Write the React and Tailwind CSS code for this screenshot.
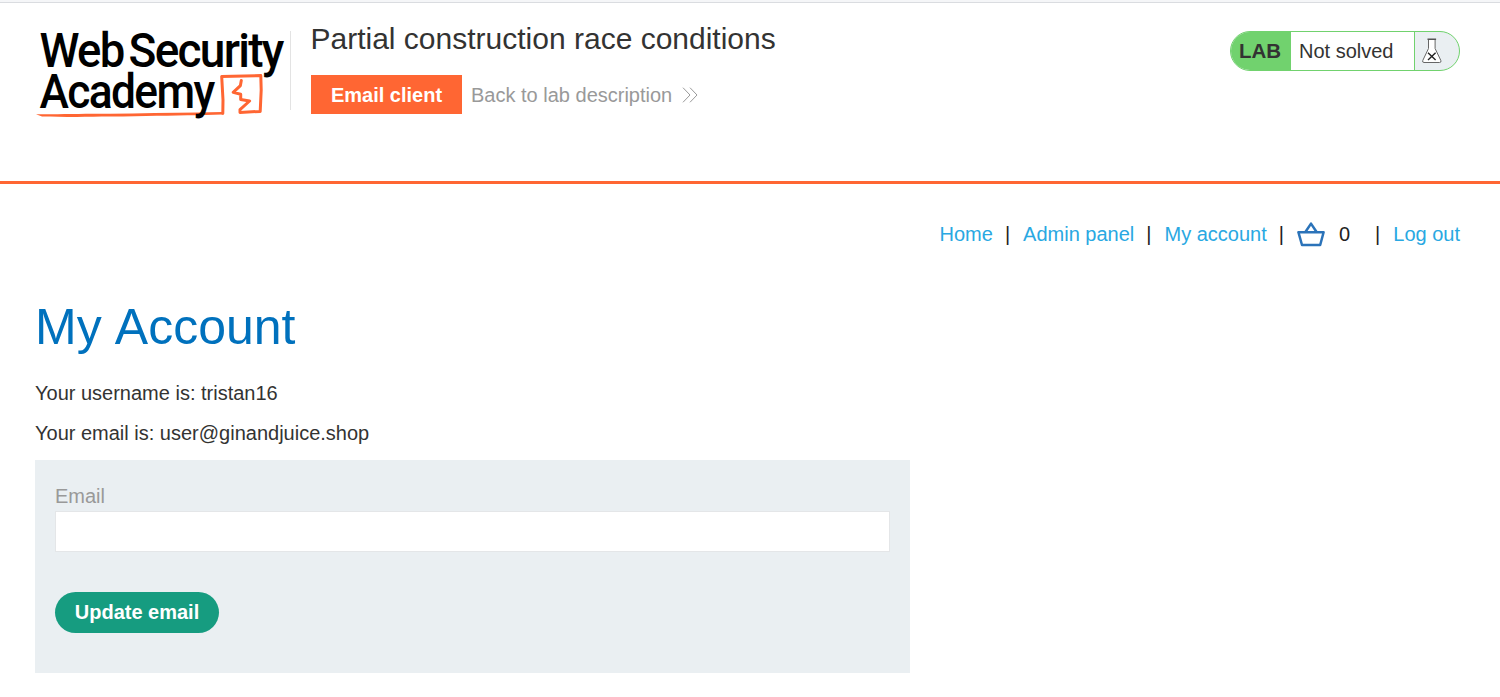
function Logo() {
  return (
    <svg
      className="block h-[100px] w-[255px] shrink-0 overflow-visible"
      viewBox="35 24 255 100"
      fill="none"
      role="img"
      aria-label="Web Security Academy"
    >
      <path d="M36 114.2C60 114.4 82 113.6 110 113.8C140 113.3 170 112.4 198 112.4L222 112V114.6L198 115.2C170 115.4 145 116.2 110 116.6C85 117 60 117 42 116.4Z" fill="#ff6633" />
      <path d="M222.8 113.4L223 100L221.7 76.6L260.8 75.6L261.2 90L260.2 111.4L240 112.4V109.6L249.6 101L240.7 99.4V94.2L233.2 92.4L240.4 85.6L241.3 80.6" stroke="#ff6633" strokeWidth="3" strokeLinejoin="round" strokeLinecap="round" />
      <g fill="#000" fontFamily="Roboto, sans-serif" fontWeight="500" fontSize="47.8" letterSpacing="-1.8">
        <text x="39.5" y="67" textLength="84" lengthAdjust="spacingAndGlyphs">Web</text>
        <text x="128.6" y="67" textLength="154" lengthAdjust="spacingAndGlyphs">Security</text>
        <text x="39.5" y="107.6" textLength="174" lengthAdjust="spacingAndGlyphs">Academy</text>
      </g>
    </svg>
  );
}

function Flask() {
  return (
    <svg className="block h-[26px] w-[22px]" viewBox="0 0 22 26" fill="none">
      <path d="M7.5 1.5V10.5L1.8 22.4Q1 24.5 3 24.5H18.6Q20.6 24.5 19.8 22.4L14.1 10.5V1.5Z" fill="#fff" stroke="#666" strokeWidth="1" />
      <path d="M6.5 1.2H15.1" stroke="#555" strokeWidth="1.4" />
      <path d="M7 14.8L14.6 22M14.6 14.8L7 22" stroke="#222" strokeWidth="1.4" />
    </svg>
  );
}

function Basket() {
  return (
    <svg className="block h-[26px] w-[28px]" viewBox="0 0 28 26" fill="none" stroke="#2b73b9" strokeWidth="2.5" strokeLinejoin="round">
      <path d="M1.4 11.2H26.6L23.2 24H5Z" />
      <path d="M8.4 11L14 2.6L19.6 11" />
    </svg>
  );
}

export default function App() {
  return (
    <div className="h-[697px] overflow-hidden bg-white font-['Liberation_Sans',Arial,sans-serif] text-[20px] leading-[24px] text-[#333332]">
      <div className="h-[3px] border-b border-[#dadce0] bg-[#f5f6f8]" />
      <header className="flex h-[181px] items-start border-b-[3px] border-[#ff6633] pr-10 pl-[35px]">
        <div className="pt-[21px]"><Logo /></div>
        <div className="mt-7 h-[79px] w-px bg-[#e3e3e3]" />
        <div className="pt-[19px] pl-5">
          <h2 className="-ml-[0.5px] text-[30px] leading-[34px]">Partial construction race conditions</h2>
          <div className="mt-[19px] flex items-center">
            <a href="#" className="flex h-[39px] w-[151px] items-center justify-center bg-[#ff6633] font-bold text-white">Email client</a>
            <a href="#" className="ml-[9px] flex items-center text-[#999999]">
              Back to lab description
              <svg className="ml-[10px] block h-4 w-[16px]" viewBox="0 0 16 16" fill="none" stroke="#999999" strokeWidth="1">
                <path d="M1 .7L8 8L1 15.3M8 .7L15 8L8 15.3" />
              </svg>
            </a>
          </div>
        </div>
        <div className="mt-7 ml-auto flex h-10 w-[230px] overflow-hidden rounded-full border border-[#71d26e] bg-[#eaeff2]">
          <div className="flex w-[60px] items-center bg-[#71d26e] pl-2 text-[20.5px] font-bold">LAB</div>
          <div className="flex w-[124px] items-center border-r border-[#71d26e] bg-white pl-2">Not solved</div>
          <div className="flex items-center pl-[6px]"><Flask /></div>
        </div>
      </header>
      <main className="pr-10 pl-[35px]">
        <nav className="flex h-[100px] items-center justify-end text-[#29a8e2]">
          <a href="#">Home</a>
          <span className="ml-[12px] text-[#222222]">|</span>
          <a href="#" className="ml-[13px]">Admin panel</a>
          <span className="ml-[12px] text-[#222222]">|</span>
          <a href="#" className="ml-[13px]">My account</a>
          <span className="ml-[12px] text-[#222222]">|</span>
          <a href="#" className="ml-[13px]"><Basket /></a>
          <span className="ml-[14px] text-[#222222]">0</span>
          <span className="ml-[25px] text-[#222222]">|</span>
          <a href="#" className="ml-[13px]">Log out</a>
        </nav>
        <h1 className="mt-[13px] text-[50px] leading-[60px] text-[#0071bd] [word-spacing:2px]">My Account</h1>
        <p className="mt-6">Your username is: tristan16</p>
        <p className="mt-4">Your email is: user@ginandjuice.shop</p>
        <form className="mt-[15px] h-[213px] w-[875px] bg-[#eaeff2] px-5 pt-6">
          <label className="block text-[#999999]" htmlFor="email">Email</label>
          <input id="email" type="email" className="mt-[3px] block h-[41px] w-full border border-[#e4e6e8] bg-white px-3 outline-none" />
          <button type="button" className="mt-10 flex h-[41px] w-[164px] items-center justify-center rounded-full bg-[#169c80] pb-0.5 font-bold text-white">Update email</button>
        </form>
      </main>
    </div>
  );
}
